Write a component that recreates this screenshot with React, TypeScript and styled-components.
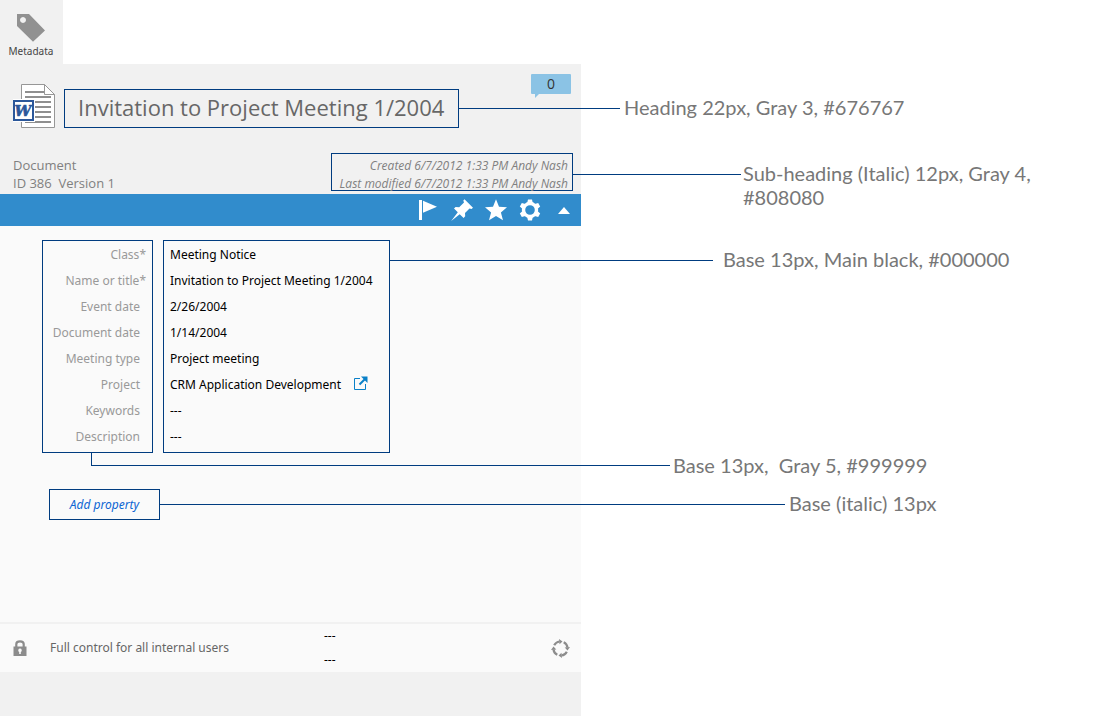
import React from "react";
import styled, { createGlobalStyle } from "styled-components";

const navy = "#003c80";
const headerFont = `"Open Sans", sans-serif`;

const GlobalStyle = createGlobalStyle`
  *, *::before, *::after { box-sizing: border-box; }
  body {
    margin: 0;
    background: #ffffff;
    color: #000000;
    font: 12px/18px "Noto Sans", sans-serif;
  }
  svg { display: block; }
`;

const Page = styled.div`
  display: grid;
  grid-template-columns: minmax(0, 581fr) minmax(0, 533fr);
  min-height: 100vh;
  overflow-x: clip;
`;

const Panel = styled.main`
  display: flex;
  flex-direction: column;
  background: linear-gradient(#ffffff 64px, #f1f1f1 64px);
`;

const Tabs = styled.nav`
  display: flex;
`;

const Tab = styled.button`
  display: flex;
  flex-direction: column;
  align-items: center;
  width: 63px;
  height: 64px;
  padding: 13px 1px 0 0;
  border: 0;
  background: #f1f1f1;
  color: #444444;
  font: inherit;
  font-size: 10px;
  line-height: 16px;
`;

const Header = styled.header`
  display: flex;
  flex-direction: column;
  gap: 25px;
  padding: 10px 8px 2px 13px;
  background: #f1f1f1;
  font-family: ${headerFont};
`;

const TitleRow = styled.div`
  display: flex;
  align-items: flex-end;
  gap: 9px;
`;

const Outline = styled.div`
  position: relative;
  border: 1px solid ${navy};
`;

const TitleBox = styled(Outline)`
  width: 395px;
  padding: 0 13px 2px;
`;

const Title = styled.h1`
  margin: 0;
  color: #676767;
  font-size: 22px;
  font-weight: 400;
  line-height: 35px;
  white-space: nowrap;
`;

const CommentBadge = styled.button`
  position: relative;
  align-self: flex-start;
  width: 40px;
  height: 20px;
  margin: 0 2px 34px auto;
  padding: 0;
  border: 0;
  border-radius: 1px;
  background: #8bc3e5;
  color: #333333;
  font: inherit;
  font-size: 14px;
  font-weight: 500;
  line-height: 20px;

  &::after {
    content: "";
    position: absolute;
    top: 100%;
    left: 4px;
    border-top: 4px solid #8bc3e5;
    border-right: 4px solid transparent;
  }
`;

const InfoRow = styled.div`
  display: flex;
  justify-content: space-between;
  align-items: flex-start;
`;

const Identity = styled.div`
  padding-top: 3px;
  color: #808080;
  font-size: 13px;
  white-space: pre;
`;

const History = styled(Outline)`
  width: 242px;
  height: 38px;
  padding: 3px 4px 0 0;
  color: #808080;
  font-style: italic;
  text-align: right;
  white-space: nowrap;
`;

const Toolbar = styled.div`
  display: flex;
  justify-content: flex-end;
  height: 32px;
  background: #318ccc;
`;

const ToolButton = styled.button`
  display: flex;
  align-items: center;
  justify-content: center;
  width: 34px;
  padding: 0;
  border: 0;
  background: transparent;
  color: #ffffff;
`;

const Body = styled.section`
  flex: 1;
  padding: 14px 0 36px 32px;
  background: #fafafa;
`;

const Properties = styled.table`
  border-collapse: separate;
  border-spacing: 10px 0;

  th, td {
    position: relative;
    height: 26px;
    padding: 2px 0 0;
    border: 0 solid ${navy};
    border-right-width: 1px;
    border-left-width: 1px;
    white-space: nowrap;
  }
  tr:first-child > * {
    height: 27px;
    border-top-width: 1px;
  }
  tr:last-child > * {
    height: 30px;
    padding-bottom: 3px;
    border-bottom-width: 1px;
  }
`;

const Label = styled.th`
  && {
    width: 111px;
    padding-right: 12px;
  }
  color: #999999;
  font-weight: 400;
  text-align: right;
`;

const Required = styled.span`
  margin-right: -6px;
`;

const Value = styled.td`
  && {
    width: 227px;
    padding-left: 6px;
  }
`;

const ValueContent = styled.div`
  display: flex;
  align-items: center;
  gap: 13px;
`;

const LinkIcon = styled.a`
  padding-bottom: 4px;
  color: #0a80c8;
`;

const AddProperty = styled.button`
  position: relative;
  display: block;
  width: 111px;
  height: 31px;
  margin: 36px 0 0 17px;
  padding: 0;
  border: 1px solid ${navy};
  background: transparent;
  color: #0b65d3;
  font: inherit;
  font-style: italic;
`;

const Permissions = styled.footer`
  display: grid;
  grid-template-columns: 37px 274px 1fr auto;
  align-items: center;
  min-height: 50px;
  margin-bottom: 44px;
  padding: 0 11px 0 13px;
  border-top: 2px solid #f1f1f1;
  background: #fafafa;
  color: #666666;
`;

const States = styled.div`
  color: #000000;
  line-height: 24px;
`;

const Refresh = styled.button`
  padding: 0;
  border: 0;
  background: transparent;
  color: #8c8c8c;
`;

const Callout = styled.span<{ $top: number }>`
  position: absolute;
  top: ${(p) => p.$top}px;
  left: 100%;
  z-index: 1;
  display: flex;
  width: max-content;
  color: #777777;
  font: 400 20px/24px Lato, sans-serif;
  text-align: left;
`;

const Leader = styled.span<{ $length: number }>`
  width: ${(p) => p.$length}px;
  height: 1px;
  margin-top: 13px;
  background: ${navy};
`;

const Elbow = styled.span`
  width: 579px;
  height: 13px;
  border: solid ${navy};
  border-width: 0 0 1px 1px;
`;

const ElbowCallout = styled(Callout)`
  left: 48px;
`;

const Note = styled.span<{ $gap: number }>`
  max-width: 300px;
  margin-left: ${(p) => p.$gap}px;
  white-space: pre-wrap;
`;

const TagIcon = () => (
  <svg width="30" height="30" viewBox="0 0 30 30" fill="#919191">
    <path fillRule="evenodd" d="M1 1H13L29 17.500L17 28.800L1 13ZM7 4a3 3 0 1 0 .01 0Z" />
  </svg>
);

const WordIcon = () => (
  <svg width="42" height="44" viewBox="0 0 42 44">
    <path d="M8.500.5H31.500L41.500 10.500V43.500H8.500Z" fill="#fff" stroke="#979797" />
    <path d="M12 8H31M12 13H38M12 18H38M12 23H38M12 28H38M12 33H38M12 38H38" stroke="#8f8f8f" strokeWidth="2" />
    <path d="M31.500.5V10.500H41.500Z" fill="#fff" stroke="#979797" />
    <path d="M0 15H22V38H0Z" fill="#fff" />
    <path d="M1 17H20V36H1Z" fill="#fff" stroke="#2b579a" strokeWidth="2" />
    <text x="10" y="32" textAnchor="middle" fill="#2b579a" stroke="#2b579a" strokeWidth=".6" fontFamily="DejaVu Serif, serif" fontSize="15" fontStyle="italic" fontWeight="700">W</text>
  </svg>
);

const FlagIcon = () => (
  <svg width="18" height="20" viewBox="0 0 18 20" fill="currentColor">
    <path d="M0 0H3V20H0ZM4 .8L18 6.800L4 12.800Z" />
  </svg>
);

const PinIcon = () => (
  <svg width="24" height="24" viewBox="0 0 24 24" fill="currentColor">
    <path d="M14.500 1.200L23 9.700L21.500 10.900L19.500 10.500L15 15L15.200 18.300L13.600 19.900L9.700 16.200L1.200 22.900L7.800 14.300L4 10.500L5.600 8.900L9.200 9.300L14 4.600L13.300 2.600Z" />
  </svg>
);

const StarIcon = () => (
  <svg width="22" height="22" viewBox="0 0 22 22" fill="currentColor">
    <path d="M11 .3L14 7.800L22 8.300L15.900 13.400L18 21.300L11 17L4 21.300L6.100 13.400L0 8.300L8 7.800Z" />
  </svg>
);

const GearIcon = () => (
  <svg width="22" height="22" viewBox="-11 -11 22 22" fill="currentColor">
    <circle r="6.500" fill="none" stroke="currentColor" strokeWidth="3.400" />
    {[0, 60, 120, 180, 240, 300].map((angle) => (
      <path key={angle} d="M-2.800 -7L-2 -10.600H2L2.800 -7Z" transform={`rotate(${angle})`} />
    ))}
  </svg>
);

const CaretIcon = () => (
  <svg width="12" height="7" viewBox="0 0 12 7" fill="currentColor">
    <path d="M6 0L12 7H0Z" />
  </svg>
);

const OpenIcon = () => (
  <svg width="14" height="14" viewBox="0 0 14 14" fill="none" stroke="currentColor">
    <path d="M6 2.500H.5V13.500H11.500V8" />
    <path d="M5.500 8.500L11 3" strokeWidth="2" />
    <path d="M7 .5H13.500V7Z" fill="currentColor" stroke="none" />
  </svg>
);

const LockIcon = () => (
  <svg width="14" height="16" viewBox="0 0 14 16" fill="#8c8c8c">
    <path d="M3.300 7V4Q3.300 1.300 7 1.300T10.700 4V7" fill="none" stroke="#8c8c8c" strokeWidth="2.200" />
    <path fillRule="evenodd" d="M.5 6.500H13.500V16H.5ZM7 8.500a1.800 1.800 0 0 0-.8 3.400V14H7.800V11.900A1.800 1.800 0 0 0 7 8.500Z" />
  </svg>
);

const RefreshIcon = () => (
  <svg width="19" height="19" viewBox="-9.500 -9.500 19 19">
    {[0, 90, 180, 270].map((angle) => (
      <g key={angle} transform={`rotate(${angle})`}>
        <path d="M-6.300 -3.200A7 7 0 0 1 -1 -7" fill="none" stroke="currentColor" strokeWidth="2.200" />
        <path d="M-1.500 -9.500L2 -7L-1 -4.200Z" fill="currentColor" />
      </g>
    ))}
  </svg>
);

const properties = [
  { label: "Class", required: true, value: "Meeting Notice" },
  { label: "Name or title", required: true, value: "Invitation to Project Meeting 1/2004" },
  { label: "Event date", value: "2/26/2004" },
  { label: "Document date", value: "1/14/2004" },
  { label: "Meeting type", value: "Project meeting" },
  { label: "Project", value: "CRM Application Development", link: true },
  { label: "Keywords", value: "---" },
  { label: "Description", value: "---" },
];

const tools = [
  { name: "Flag", icon: <FlagIcon /> },
  { name: "Pin", icon: <PinIcon /> },
  { name: "Favorite", icon: <StarIcon /> },
  { name: "Settings", icon: <GearIcon /> },
  { name: "Collapse", icon: <CaretIcon /> },
];

export default function App() {
  return (
    <Page>
      <GlobalStyle />
      <Panel>
        <Tabs>
          <Tab type="button"><TagIcon />Metadata</Tab>
        </Tabs>
        <Header>
          <TitleRow>
            <WordIcon />
            <TitleBox>
              <Title>Invitation to Project Meeting 1/2004</Title>
              <Callout $top={5}>
                <Leader $length={162} />
                <Note $gap={4}>Heading 22px, Gray 3, #676767</Note>
              </Callout>
            </TitleBox>
            <CommentBadge type="button" aria-label="0 comments">0</CommentBadge>
          </TitleRow>
          <InfoRow>
            <Identity>{"Document\nID 386  Version 1"}</Identity>
            <History>
              Created 6/7/2012 1:33 PM Andy Nash<br />
              Last modified 6/7/2012 1:33 PM Andy Nash
              <Callout $top={7}>
                <Leader $length={169} />
                <Note $gap={2}>Sub-heading (Italic) 12px, Gray 4, #808080</Note>
              </Callout>
            </History>
          </InfoRow>
        </Header>
        <Toolbar>
          {tools.map((tool) => (
            <ToolButton key={tool.name} type="button" aria-label={tool.name}>{tool.icon}</ToolButton>
          ))}
        </Toolbar>
        <Body>
          <Properties>
            <tbody>
              {properties.map((row, index) => (
                <tr key={row.label}>
                  <Label scope="row">
                    {row.label}
                    {row.required && <Required>*</Required>}
                    {index === properties.length - 1 && (
                      <ElbowCallout $top={30}>
                        <Elbow />
                        <Note $gap={3}>{"Base 13px,  Gray 5, #999999"}</Note>
                      </ElbowCallout>
                    )}
                  </Label>
                  <Value>
                    <ValueContent>
                      {row.value}
                      {row.link && <LinkIcon href="#project" aria-label="Open project"><OpenIcon /></LinkIcon>}
                    </ValueContent>
                    {index === 0 && (
                      <Callout $top={6}>
                        <Leader $length={324} />
                        <Note $gap={10}>Base 13px, Main black, #000000</Note>
                      </Callout>
                    )}
                  </Value>
                </tr>
              ))}
            </tbody>
          </Properties>
          <AddProperty type="button">
            Add property
            <Callout $top={1}>
              <Leader $length={626} />
              <Note $gap={4}>Base (italic) 13px</Note>
            </Callout>
          </AddProperty>
        </Body>
        <Permissions>
          <LockIcon />
          <span>Full control for all internal users</span>
          <States>---<br />---</States>
          <Refresh type="button" aria-label="Workflow"><RefreshIcon /></Refresh>
        </Permissions>
      </Panel>
    </Page>
  );
}
